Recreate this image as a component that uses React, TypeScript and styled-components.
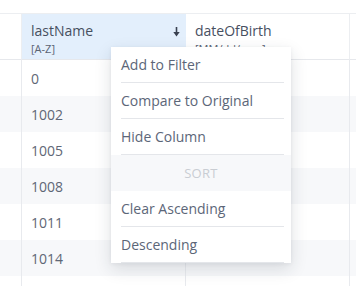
import React from "react";
import styled, { createGlobalStyle } from "styled-components";

const Global = createGlobalStyle`
  html, body { margin: 0; padding: 0; background: #fff; }
  body { font-family: "Open Sans", "Noto Sans", sans-serif; overflow: hidden; }
`;

const Page = styled.div`
  position: relative;
  width: 356px;
  height: 286px;
  padding-top: 13px;
  box-sizing: border-box;
  overflow: hidden;
`;

const Grid = styled.div`
  display: grid;
  grid-template-columns: 22px 164px 164px 1fr;
  border-top: 1px solid #eceef1;
`;

const HeadCell = styled.div<{ $active?: boolean; $line?: boolean }>`
  position: relative;
  height: 46px;
  box-sizing: border-box;
  padding: 7px 10px 0 9px;
  background: ${(p) => (p.$active ? "#e3effc" : "#fff")};
  border-bottom: 1px solid #e6e8ec;
  border-right: ${(p) => (p.$line ? "1px solid #eceef1" : "none")};
`;

const HeadTitle = styled.div`
  font-size: 14px;
  line-height: 20px;
  color: #474f5f;
`;

const HeadSub = styled.div`
  font-size: 11px;
  line-height: 15px;
  color: #5b6373;
`;

const SortIcon = styled.svg`
  position: absolute;
  right: 6px;
  top: 13px;
`;

const Cell = styled.div<{ $stripe?: boolean; $line?: boolean }>`
  height: 36px;
  box-sizing: border-box;
  display: flex;
  align-items: center;
  padding-left: 9px;
  font-size: 14px;
  color: #5f6776;
  background: ${(p) => (p.$stripe ? "#f7f8fa" : "#fff")};
  border-right: ${(p) => (p.$line ? "1px solid #e8eaee" : "none")};
`;

const Menu = styled.div`
  position: absolute;
  left: 111px;
  top: 47px;
  width: 180px;
  background: #fff;
  box-shadow: 0 6px 16px rgba(30, 40, 60, 0.14), 0 1px 4px rgba(30, 40, 60, 0.06);
  display: flex;
  flex-direction: column;
`;

const MenuItem = styled.div`
  height: 36px;
  margin: 0 7px 0 10px;
  box-sizing: border-box;
  border-bottom: 1px solid #e4e6ea;
  display: flex;
  align-items: center;
  font-size: 14px;
  color: #5c6678;
`;

const MenuSection = styled.div`
  height: 36px;
  background: #f7f8fa;
  display: flex;
  align-items: center;
  justify-content: center;
  font-size: 13px;
  letter-spacing: 0.3px;
  color: #c9cdd3;
`;

const values = ["0", "1002", "1005", "1008", "1011", "1014", ""];

export default function App() {
  return (
    <Page>
      <Global />
      <Grid>
        <HeadCell $line />
        <HeadCell $active>
          <HeadTitle>lastName</HeadTitle>
          <HeadSub>[A-Z]</HeadSub>
          <SortIcon width="7" height="10" viewBox="0 0 7 10">
            <path d="M3.5 0 V6" stroke="#3a4150" strokeWidth="1.6" />
            <path d="M0.3 5 H6.7 L3.5 9.5 Z" fill="#3a4150" />
          </SortIcon>
        </HeadCell>
        <HeadCell $line>
          <HeadTitle>dateOfBirth</HeadTitle>
          <HeadSub>[MM/dd/yyyy]</HeadSub>
        </HeadCell>
        <HeadCell />
        {values.map((v, i) => (
          <React.Fragment key={i}>
            <Cell $stripe={i % 2 === 1} $line />
            <Cell $stripe={i % 2 === 1} $line>{v}</Cell>
            <Cell $stripe={i % 2 === 1} $line />
            <Cell $stripe={i % 2 === 1} />
          </React.Fragment>
        ))}
      </Grid>
      <Menu>
        <MenuItem>Add to Filter</MenuItem>
        <MenuItem>Compare to Original</MenuItem>
        <MenuItem>Hide Column</MenuItem>
        <MenuSection>SORT</MenuSection>
        <MenuItem>Clear Ascending</MenuItem>
        <MenuItem>Descending</MenuItem>
      </Menu>
    </Page>
  );
}
